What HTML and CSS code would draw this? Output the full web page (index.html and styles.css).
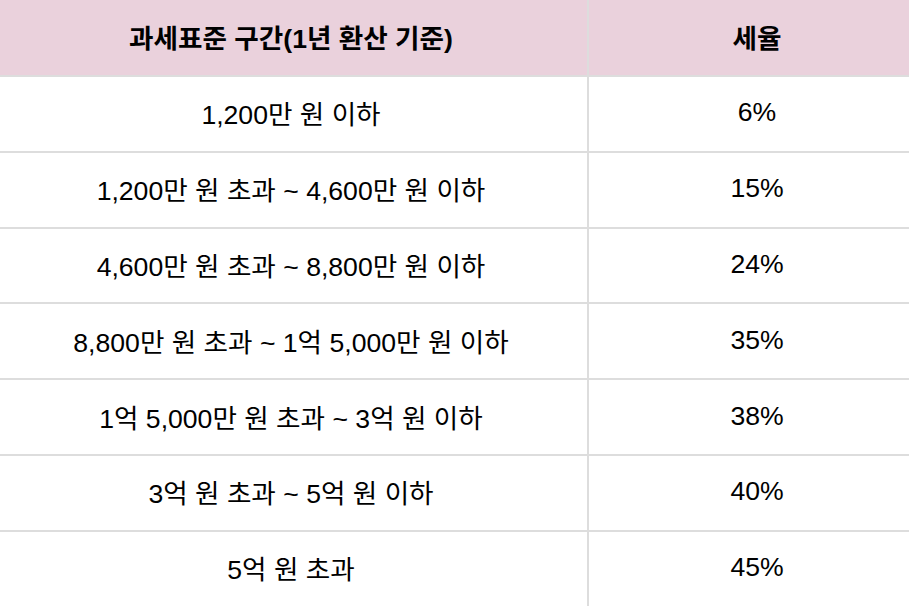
FILE: index.html
```html
<!DOCTYPE html>
<html lang="ko">
<head>
<meta charset="utf-8">
<link rel="stylesheet" href="styles.css">
</head>
<body>
<div class="page">
  <div class="table">
    <div class="row head">
      <div class="cell a">과세표준 구간(1년 환산 기준)</div>
      <div class="cell b">세율</div>
    </div>
    <div class="row">
      <div class="cell a">1,200만 원 이하</div>
      <div class="cell b">6%</div>
    </div>
    <div class="row">
      <div class="cell a">1,200만 원 초과 ~ 4,600만 원 이하</div>
      <div class="cell b">15%</div>
    </div>
    <div class="row">
      <div class="cell a">4,600만 원 초과 ~ 8,800만 원 이하</div>
      <div class="cell b">24%</div>
    </div>
    <div class="row">
      <div class="cell a">8,800만 원 초과 ~ 1억 5,000만 원 이하</div>
      <div class="cell b">35%</div>
    </div>
    <div class="row">
      <div class="cell a">1억 5,000만 원 초과 ~ 3억 원 이하</div>
      <div class="cell b">38%</div>
    </div>
    <div class="row">
      <div class="cell a">3억 원 초과 ~ 5억 원 이하</div>
      <div class="cell b">40%</div>
    </div>
    <div class="row">
      <div class="cell a">5억 원 초과</div>
      <div class="cell b">45%</div>
    </div>
  </div>
</div>
</body>
</html>
```

FILE: styles.css
```css
html, body {
  margin: 0;
  padding: 0;
  background: #ffffff;
}
.page {
  width: 909px;
  height: 606px;
  overflow: hidden;
}
.table {
  margin-left: -5px;
  width: 930px;
  font-family: "Liberation Sans", Arial, "Noto Sans CJK KR", sans-serif;
  font-size: 26.6px;
  color: #000000;
}
.row {
  display: flex;
  height: 73.8px;
  border-bottom: 2px solid #dddddd;
}
.row.head {
  height: 75px;
  background: #ead1dc;
  font-weight: bold;
}
.cell {
  display: flex;
  align-items: center;
  justify-content: center;
  white-space: nowrap;
  padding-bottom: 2px;
}
.cell.a {
  width: 592px;
  border-right: 2px solid #dddddd;
}
.cell.b {
  width: 336px;
}
```
